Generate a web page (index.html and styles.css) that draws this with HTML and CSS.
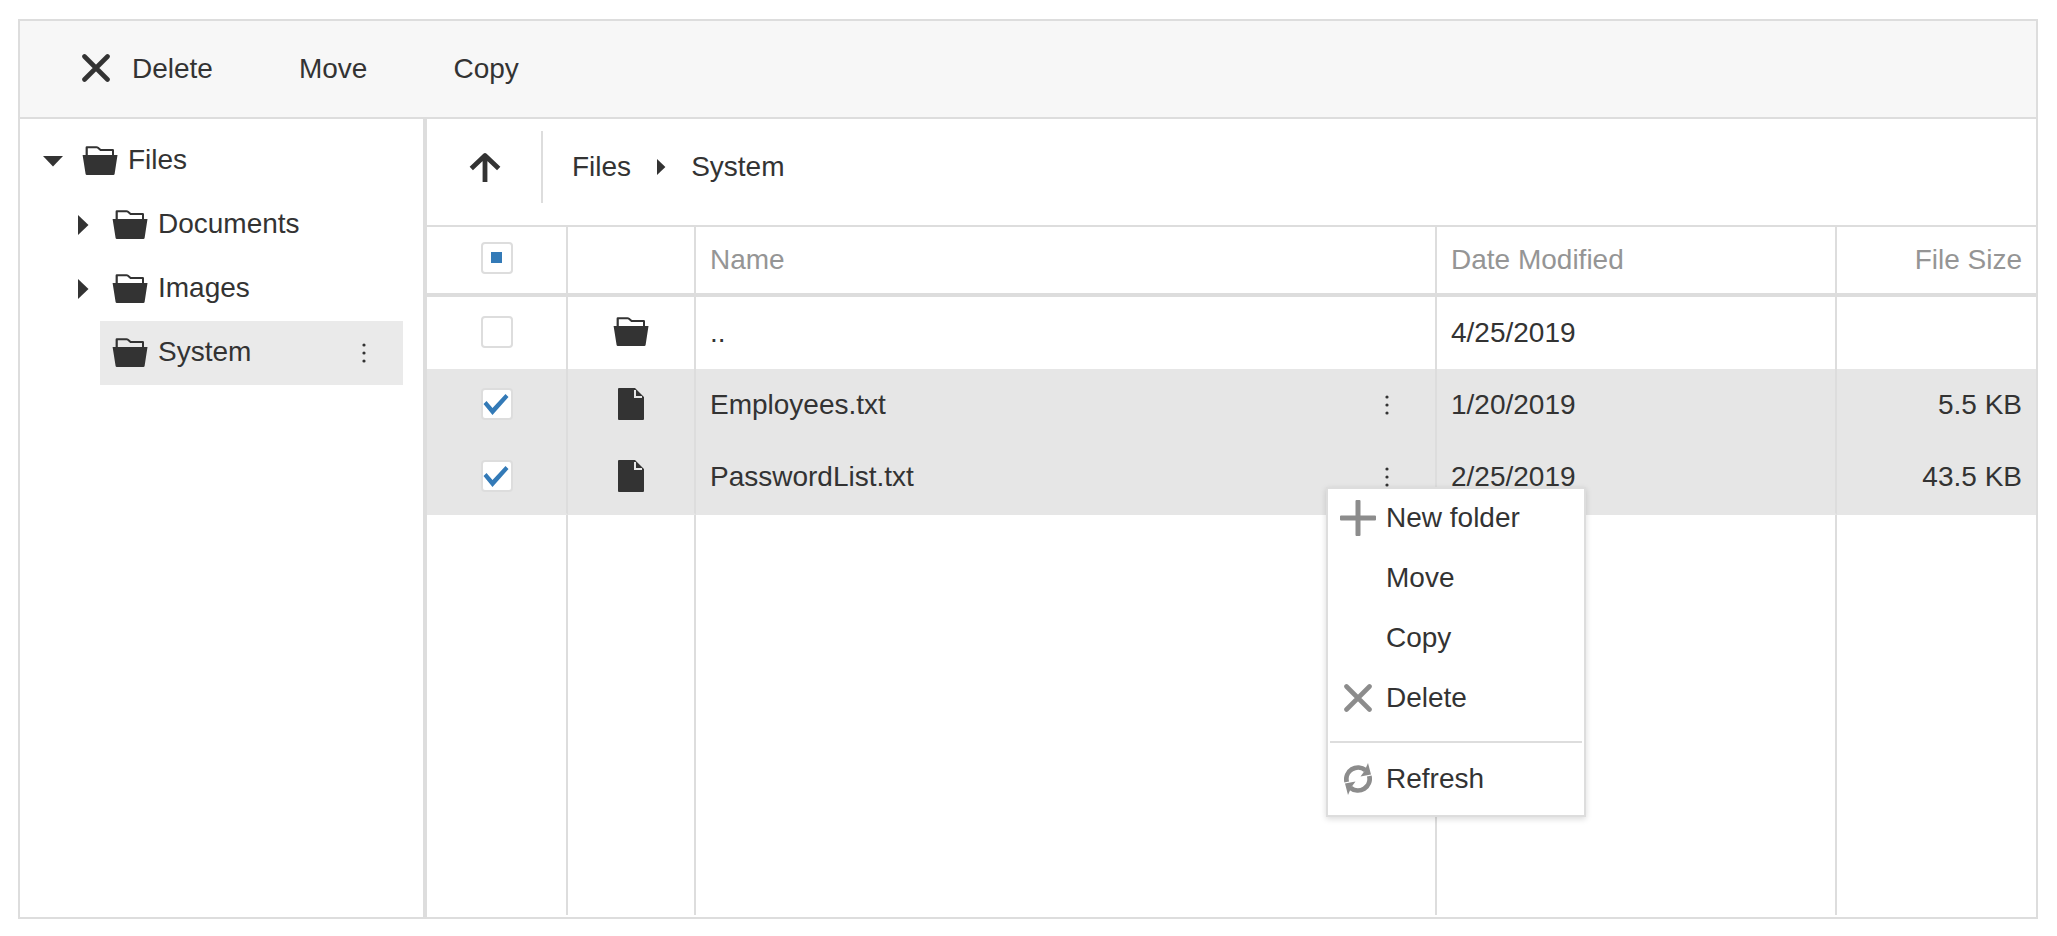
FILE: index.html
```html
<!DOCTYPE html>
<html lang="en">
<head>
<meta charset="utf-8">
<title>File Manager</title>
<link rel="stylesheet" href="styles.css">
</head>
<body>
<svg class="sprite" aria-hidden="true">
  <symbol id="folder" viewBox="0 0 36 30">
    <path fill-rule="evenodd" d="M3.600 9V1.400Q3.600 .2 4.800 .2H14.500Q15.700 .2 16.600 1L19 3H30.800Q32 3 32 4.200V9H35.500L32.600 28Q32.400 29 31.400 29H4.800Q3.800 29 3.600 28L.6 9ZM5.800 9H30V5H18.200L15 2.200H5.800Z"/>
  </symbol>
  <symbol id="file" viewBox="0 0 26 32">
    <path fill-rule="evenodd" d="M1 0H17L26 9V31Q26 32 25 32H1Q0 32 0 31V1Q0 0 1 0ZM16 2V10H24V8H18V2Z"/>
  </symbol>
  <symbol id="cross" viewBox="0 0 28 28">
    <path d="M2.500 2.500L25.500 25.500M25.500 2.500L2.500 25.500" fill="none" stroke="currentColor" stroke-width="4.600" stroke-linecap="round"/>
  </symbol>
  <symbol id="plus" viewBox="0 0 36 36">
    <path d="M15.500 1Q15.500 0 16.500 0H19.500Q20.500 0 20.500 1V15.500H35Q36 15.500 36 16.500V19.500Q36 20.500 35 20.500H20.500V35Q20.500 36 19.500 36H16.500Q15.500 36 15.500 35V20.500H1Q0 20.500 0 19.500V16.500Q0 15.500 1 15.500H15.500Z"/>
  </symbol>
  <symbol id="up" viewBox="0 0 32 30">
    <path d="M16 30V4M2.300 16.500L16 3.500L29.700 16.500" fill="none" stroke="currentColor" stroke-width="4.800" stroke-linejoin="round"/>
  </symbol>
  <symbol id="dots" viewBox="0 0 4 20">
    <circle cx="2" cy="2" r="1.600"/><circle cx="2" cy="10" r="1.600"/><circle cx="2" cy="18" r="1.600"/>
  </symbol>
  <symbol id="down" viewBox="0 0 20 20"><path d="M0 5H20L10 15.500Z"/></symbol>
  <symbol id="right" viewBox="0 0 20 20"><path d="M5 0V20L15.500 10Z"/></symbol>
  <symbol id="refresh" viewBox="0 0 28 32">
    <path d="M2.700 19A11.700 11.700 0 0 1 21.500 7.200M25.300 13A11.700 11.700 0 0 1 6.500 24.800" fill="none" stroke="currentColor" stroke-width="4.800"/>
    <path d="M24 0L27 11.500L16.500 13.500L20.500 8Z"/>
    <path d="M4 32L1 20.500L11.500 18.500L7.500 24Z"/>
  </symbol>
</svg>

<main class="manager">
  <div class="toolbar" role="toolbar">
    <button class="tool"><svg class="icon-cross"><use href="#cross"/></svg><span class="label">Delete</span></button>
    <button class="tool"><span class="label">Move</span></button>
    <button class="tool"><span class="label">Copy</span></button>
  </div>
  <div class="body">
    <nav class="sidebar" aria-label="Folders">
      <ul class="tree">
        <li>
          <div class="node"><button class="toggle" aria-label="Collapse Files"><svg class="caret"><use href="#down"/></svg></button><a class="entry" href="#files"><svg class="icon-folder"><use href="#folder"/></svg><span class="label">Files</span></a></div>
          <ul class="branch">
            <li class="node"><button class="toggle" aria-label="Expand Documents"><svg class="caret"><use href="#right"/></svg></button><a class="entry" href="#documents"><svg class="icon-folder"><use href="#folder"/></svg><span class="label">Documents</span></a></li>
            <li class="node"><button class="toggle" aria-label="Expand Images"><svg class="caret"><use href="#right"/></svg></button><a class="entry" href="#images"><svg class="icon-folder"><use href="#folder"/></svg><span class="label">Images</span></a></li>
            <li class="node"><span class="toggle"></span><div class="entry selected"><a class="entry-link" href="#system"><svg class="icon-folder"><use href="#folder"/></svg><span class="label">System</span></a><button class="more" aria-label="System actions"><svg class="icon-dots"><use href="#dots"/></svg></button></div></li>
          </ul>
        </li>
      </ul>
    </nav>
    <section class="content">
      <div class="path">
        <button class="go-up" aria-label="Parent folder"><svg class="icon-up"><use href="#up"/></svg></button>
        <div class="crumbs">
          <a class="crumb" href="#files">Files</a>
          <svg class="crumb-caret"><use href="#right"/></svg>
          <a class="crumb" href="#system">System</a>
        </div>
      </div>
      <table class="files">
        <colgroup><col class="col-check"><col class="col-icon"><col><col class="col-date"><col class="col-size"></colgroup>
        <thead>
          <tr>
            <th class="center"><input class="check partial" type="checkbox" aria-label="Select all"></th>
            <th></th>
            <th>Name</th>
            <th>Date Modified</th>
            <th class="right">File Size</th>
          </tr>
        </thead>
        <tbody>
          <tr class="row">
            <td class="center"><input class="check" type="checkbox" aria-label="Select parent folder"></td>
            <td class="center"><svg class="icon-folder"><use href="#folder"/></svg></td>
            <td>..</td>
            <td>4/25/2019</td>
            <td></td>
          </tr>
          <tr class="row picked">
            <td class="center"><input class="check" type="checkbox" checked aria-label="Select Employees.txt"></td>
            <td class="center"><svg class="icon-file"><use href="#file"/></svg></td>
            <td><div class="name"><span>Employees.txt</span><button class="more" aria-label="Employees.txt actions"><svg class="icon-dots"><use href="#dots"/></svg></button></div></td>
            <td>1/20/2019</td>
            <td class="right">5.5 KB</td>
          </tr>
          <tr class="row picked last">
            <td class="center"><input class="check" type="checkbox" checked aria-label="Select PasswordList.txt"></td>
            <td class="center"><svg class="icon-file"><use href="#file"/></svg></td>
            <td class="anchor"><div class="name"><span>PasswordList.txt</span><button class="more" aria-label="PasswordList.txt actions"><svg class="icon-dots"><use href="#dots"/></svg></button></div>
              <div class="menu" role="menu">
                <button class="item" role="menuitem"><span class="slot"><svg class="icon-plus"><use href="#plus"/></svg></span><span class="label">New folder</span></button>
                <button class="item" role="menuitem"><span class="slot"></span><span class="label">Move</span></button>
                <button class="item" role="menuitem"><span class="slot"></span><span class="label">Copy</span></button>
                <button class="item" role="menuitem"><span class="slot"><svg class="icon-cross"><use href="#cross"/></svg></span><span class="label">Delete</span></button>
                <hr class="rule">
                <button class="item" role="menuitem"><span class="slot"><svg class="icon-refresh"><use href="#refresh"/></svg></span><span class="label">Refresh</span></button>
              </div>
            </td>
            <td>2/25/2019</td>
            <td class="right">43.5 KB</td>
          </tr>
          <tr class="filler"><td></td><td></td><td></td><td></td><td></td></tr>
        </tbody>
      </table>
    </section>
  </div>
</main>
</body>
</html>
```

FILE: styles.css
```css
* { box-sizing: border-box; }

body {
  display: flex;
  min-height: 100vh;
  margin: 0;
  padding: 19px 19px 17px 18px;
  background: #fff;
  color: #333;
  font: 28px/32px "Liberation Sans", Arial, sans-serif;
}

button {
  margin: 0;
  padding: 0;
  border: 0;
  background: none;
  color: inherit;
  font: inherit;
  text-align: left;
}

a { color: inherit; text-decoration: none; }
ul { margin: 0; padding: 0; list-style: none; }
svg { display: block; flex: none; fill: currentColor; }

.sprite { position: absolute; width: 0; height: 0; }
.icon-folder { width: 36px; height: 30px; }
.icon-file { width: 26px; height: 32px; }
.icon-cross { width: 28px; height: 28px; }
.icon-plus { width: 36px; height: 36px; }
.icon-refresh { width: 28px; height: 32px; }
.icon-up { width: 32px; height: 30px; }
.icon-dots { width: 4px; height: 20px; }
.caret { width: 20px; height: 20px; }

.manager {
  display: flex;
  flex: 1;
  flex-direction: column;
  min-width: 0;
  border: 2px solid #ddd;
}

.toolbar {
  display: flex;
  align-items: center;
  gap: 86px;
  height: 98px;
  padding: 0 62px;
  border-bottom: 2px solid #ddd;
  background: #f7f7f7;
}

.tool { display: flex; align-items: center; gap: 22px; height: 64px; }
.tool .icon-cross { margin-bottom: 2px; }

.body { display: flex; flex: 1; }

.sidebar {
  flex: none;
  width: 407px;
  padding: 10px 20px 0 16px;
  border-right: 4px solid #ddd;
}

.branch { padding-left: 30px; }
.node { display: flex; height: 64px; }
.toggle {
  display: flex;
  align-items: center;
  justify-content: center;
  width: 34px;
}
.entry { display: flex; flex: 1; align-items: center; gap: 10px; padding-left: 12px; }
.entry-link { display: flex; flex: 1; align-items: center; gap: 10px; }
.sidebar .label { padding-bottom: 2px; }
.selected { background: #eaeaea; }
.more {
  display: flex;
  align-items: center;
  justify-content: center;
  width: 40px;
  height: 40px;
}
.selected .more { margin-right: 19px; }

.content { display: flex; flex: 1; flex-direction: column; min-width: 0; padding-bottom: 2px; }

.path { display: flex; padding: 12px 0 22px; border-bottom: 2px solid #ddd; }
.go-up {
  display: flex;
  align-items: center;
  justify-content: center;
  width: 116px;
  height: 72px;
  padding-left: 2px;
  border-right: 2px solid #ddd;
}
.crumbs { display: flex; align-items: center; padding-left: 29px; }
.crumb-caret { width: 16px; height: 16px; margin: 0 22px; }

.files {
  flex: 1;
  width: 100%;
  height: 1px;
  table-layout: fixed;
  border-collapse: separate;
  border-spacing: 0;
}
.col-check { width: 141px; }
.col-icon { width: 128px; }
.col-date { width: 400px; }
.col-size { width: 199px; }

.files th,
.files td {
  padding: 0 14px;
  border-right: 2px solid #ddd;
  text-align: left;
  font-weight: 400;
}
.files th:last-child,
.files td:last-child { border-right: 0; }
.files th { height: 70px; border-bottom: 4px solid #ddd; color: #959595; }
.row td { height: 72px; }
.row.picked td { background: #e6e6e6; }
.row.last td { height: 74px; border-bottom: 2px solid #e6e6e6; }
.files .filler td { height: auto; }
.files .center { padding: 0 0 2px; }
.files th.center { padding-bottom: 4px; }
.center > * { margin: 0 auto; }
.files .right { text-align: right; }

.name { display: flex; align-items: center; justify-content: space-between; }
.name .more { margin-right: 14px; }
.files .anchor { position: relative; }

.check {
  display: block;
  width: 32px;
  height: 32px;
  border: 2px solid #ddd;
  border-radius: 4px;
  background: #fff;
  appearance: none;
}
.check::before { display: block; content: ""; }
.check:checked::before {
  height: 28px;
  background: #337ab7;
  clip-path: polygon(1px 14px, 4px 11px, 10px 18px, 23px 4px, 26px 7px, 10px 25px);
}
.partial::before { width: 11px; height: 11px; margin: 8px; background: #337ab7; }

.menu {
  position: absolute;
  top: 46px;
  right: -151px;
  z-index: 1;
  width: 260px;
  padding-bottom: 5px;
  border: 2px solid #ddd;
  background: #fff;
  box-shadow: 0 2px 6px rgba(0, 0, 0, 0.15);
}
.item { display: flex; align-items: center; gap: 10px; width: 100%; height: 60px; padding: 0 12px 2px; }
.slot { display: flex; justify-content: center; width: 36px; color: #8c8c8c; }
.rule { margin: 12px 2px 7px; border: 0; border-top: 2px solid #ddd; }
```
